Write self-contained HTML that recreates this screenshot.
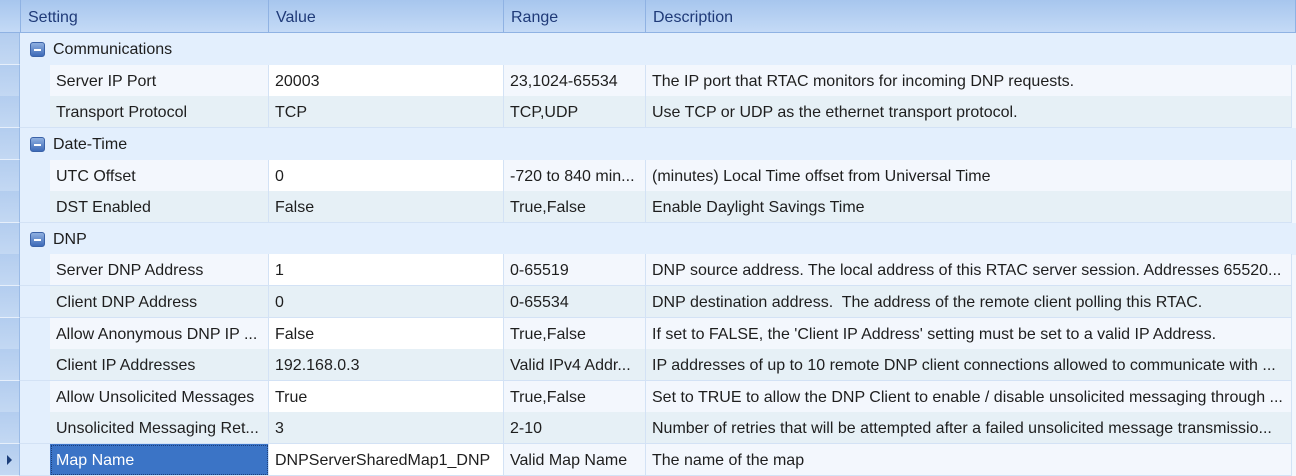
<!DOCTYPE html><html><head><style>
body{margin:0;width:1296px;height:474px;overflow:hidden;background:#f3f7fd;font-family:"Liberation Sans",sans-serif;font-size:16px;color:#1e1e1e;position:relative}
.r{position:absolute;left:0;width:1296px;height:32px}
.c{position:absolute;top:0;line-height:34px;border-right:1px solid #d3e2f5;border-bottom:1px solid #d3e2f5;white-space:nowrap;overflow:hidden;padding-left:6px;box-sizing:border-box;height:32px}
.ind{position:absolute;left:0;top:0;width:20px;height:32px;background:linear-gradient(#b3cdef,#c3d8f3);border-right:1px solid #9bbbe6;border-bottom:1px solid #e6effb;box-sizing:border-box}
.hd{position:absolute;top:0;height:33px;line-height:36px;background:linear-gradient(#a7c6ee,#c4daf6);border-right:1px solid #8fb2e3;border-bottom:1px solid #8fb2e3;color:#1f3a78;padding-left:7px;box-sizing:border-box}
.g{background:#e3effd}
.o{background:#f3f7fd}.e{background:#e6f0f6}.w{background:#fff}
.gt{position:absolute;left:53px;line-height:34px}
.icon{position:absolute;left:30px;top:9px;width:15px;height:15px;border-radius:3px;background:linear-gradient(#8fb0e0,#3e6bb8);border:1px solid #3a62a8;box-sizing:border-box}
.icon:after{content:"";position:absolute;left:3px;top:6px;width:7px;height:2px;background:#fff}
.sel{background:#3b74c6;color:#fff;outline:1px dotted #1c3e7a;outline-offset:-2px}
</style></head><body>
<div class="hd" style="left:0;width:21px;padding:0"></div>
<div class="hd" style="left:21px;width:248px">Setting</div>
<div class="hd" style="left:269px;width:235px">Value</div>
<div class="hd" style="left:504px;width:142px">Range</div>
<div class="hd" style="left:646px;width:650px">Description</div>

<div class="r g" style="top:33px"><div class="ind"></div><div class="icon"></div><div class="gt">Communications</div></div>
<div class="r" style="top:65px"><div class="ind"></div><div class="c g" style="left:20px;width:30px;border-right:none"></div><div class="c o" style="left:50px;width:219px">Server IP Port</div><div class="c w" style="left:269px;width:235px">20003</div><div class="c o" style="left:504px;width:142px">23,1024-65534</div><div class="c o" style="left:646px;width:646px">The IP port that RTAC monitors for incoming DNP requests.</div></div>
<div class="r" style="top:96px"><div class="ind"></div><div class="c g" style="left:20px;width:30px;border-right:none"></div><div class="c e" style="left:50px;width:219px">Transport Protocol</div><div class="c e" style="left:269px;width:235px">TCP</div><div class="c e" style="left:504px;width:142px">TCP,UDP</div><div class="c e" style="left:646px;width:646px">Use TCP or UDP as the ethernet transport protocol.</div></div>

<div class="r g" style="top:128px"><div class="ind"></div><div class="icon"></div><div class="gt">Date-Time</div></div>
<div class="r" style="top:160px"><div class="ind"></div><div class="c g" style="left:20px;width:30px;border-right:none"></div><div class="c o" style="left:50px;width:219px">UTC Offset</div><div class="c w" style="left:269px;width:235px">0</div><div class="c o" style="left:504px;width:142px">-720 to 840 min...</div><div class="c o" style="left:646px;width:646px">(minutes) Local Time offset from Universal Time</div></div>
<div class="r" style="top:191px"><div class="ind"></div><div class="c g" style="left:20px;width:30px;border-right:none"></div><div class="c e" style="left:50px;width:219px">DST Enabled</div><div class="c e" style="left:269px;width:235px">False</div><div class="c e" style="left:504px;width:142px">True,False</div><div class="c e" style="left:646px;width:646px">Enable Daylight Savings Time</div></div>

<div class="r g" style="top:223px"><div class="ind"></div><div class="icon"></div><div class="gt">DNP</div></div>
<div class="r" style="top:254px"><div class="ind"></div><div class="c g" style="left:20px;width:30px;border-right:none"></div><div class="c o" style="left:50px;width:219px">Server DNP Address</div><div class="c w" style="left:269px;width:235px">1</div><div class="c o" style="left:504px;width:142px">0-65519</div><div class="c o" style="left:646px;width:646px">DNP source address. The local address of this RTAC server session. Addresses 65520...</div></div>
<div class="r" style="top:286px"><div class="ind"></div><div class="c g" style="left:20px;width:30px;border-right:none"></div><div class="c e" style="left:50px;width:219px">Client DNP Address</div><div class="c e" style="left:269px;width:235px">0</div><div class="c e" style="left:504px;width:142px">0-65534</div><div class="c e" style="left:646px;width:646px">DNP destination address.&nbsp; The address of the remote client polling this RTAC.</div></div>
<div class="r" style="top:318px"><div class="ind"></div><div class="c g" style="left:20px;width:30px;border-right:none"></div><div class="c o" style="left:50px;width:219px">Allow Anonymous DNP IP ...</div><div class="c w" style="left:269px;width:235px">False</div><div class="c o" style="left:504px;width:142px">True,False</div><div class="c o" style="left:646px;width:646px">If set to FALSE, the 'Client IP Address' setting must be set to a valid IP Address.</div></div>
<div class="r" style="top:349px"><div class="ind"></div><div class="c g" style="left:20px;width:30px;border-right:none"></div><div class="c e" style="left:50px;width:219px">Client IP Addresses</div><div class="c e" style="left:269px;width:235px">192.168.0.3</div><div class="c e" style="left:504px;width:142px">Valid IPv4 Addr...</div><div class="c e" style="left:646px;width:646px">IP addresses of up to 10 remote DNP client connections allowed to communicate with ...</div></div>
<div class="r" style="top:381px"><div class="ind"></div><div class="c g" style="left:20px;width:30px;border-right:none"></div><div class="c o" style="left:50px;width:219px">Allow Unsolicited Messages</div><div class="c w" style="left:269px;width:235px">True</div><div class="c o" style="left:504px;width:142px">True,False</div><div class="c o" style="left:646px;width:646px">Set to TRUE to allow the DNP Client to enable / disable unsolicited messaging through ...</div></div>
<div class="r" style="top:412px"><div class="ind"></div><div class="c g" style="left:20px;width:30px;border-right:none"></div><div class="c e" style="left:50px;width:219px">Unsolicited Messaging Ret...</div><div class="c e" style="left:269px;width:235px">3</div><div class="c e" style="left:504px;width:142px">2-10</div><div class="c e" style="left:646px;width:646px">Number of retries that will be attempted after a failed unsolicited message transmissio...</div></div>
<div class="r" style="top:444px"><div class="ind"><div style="position:absolute;left:7px;top:11px;width:0;height:0;border-left:5px solid #1c3e7a;border-top:5px solid transparent;border-bottom:5px solid transparent"></div></div><div class="c g" style="left:20px;width:30px;border-right:none"></div><div class="c sel" style="left:50px;width:219px">Map Name</div><div class="c w" style="left:269px;width:235px">DNPServerSharedMap1_DNP</div><div class="c o" style="left:504px;width:142px">Valid Map Name</div><div class="c o" style="left:646px;width:646px">The name of the map</div></div>
</body></html>
